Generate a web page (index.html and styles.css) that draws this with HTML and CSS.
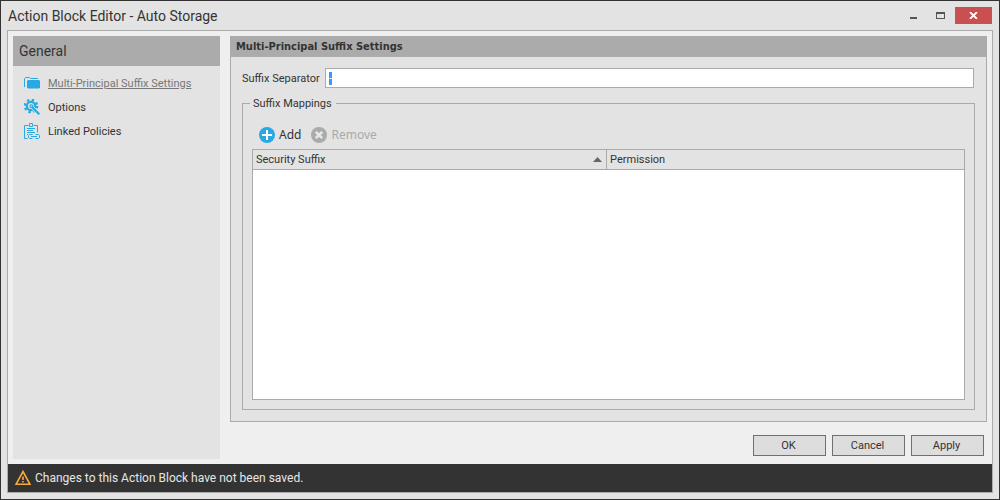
FILE: index.html
```html
<!DOCTYPE html>
<html lang="en">
<head>
<meta charset="utf-8">
<title>Action Block Editor - Auto Storage</title>
<link rel="stylesheet" href="styles.css">
</head>
<body>
<div class="window">
  <header class="titlebar">
    <h1 class="window-title">Action Block Editor - Auto Storage</h1>
    <div class="window-controls">
      <button class="control" type="button" aria-label="Minimize"><svg width="7" height="11" viewBox="0 0 7 11"><path d="M0 7h7v2H0z" fill="#555"/></svg></button>
      <button class="control" type="button" aria-label="Maximize"><svg width="9" height="7" viewBox="0 0 9 7" shape-rendering="crispEdges"><path d="M0 0h9v7H0zM1 2v4h7V2z" fill="#555" fill-rule="evenodd"/></svg></button>
      <button class="control close" type="button" aria-label="Close"><svg width="9" height="7" viewBox="0 0 9 7"><path d="M1 0l7 7M8 0L1 7" stroke="#fff" stroke-width="1.8"/></svg></button>
    </div>
  </header>
  <div class="frame">
    <div class="content">
      <nav class="sidebar">
        <h2 class="sidebar-title">General</h2>
        <ul class="menu">
          <li><a class="menu-link current" href="#suffix">
            <svg class="menu-icon" width="16" height="16" viewBox="0 0 16 16"><path d="M.5 12V3.500L1.500 2.500h4L6.500 3.500H14" fill="none" stroke="#29a9e1"/><path d="M4 5H15l1 1v6.500l-1 1H4l-1-1V6z" fill="#29a9e1"/></svg>
            <span class="menu-text">Multi-Principal Suffix Settings</span></a></li>
          <li><a class="menu-link" href="#options">
            <svg class="menu-icon" width="16" height="16" viewBox="0 0 16 16" fill="none" stroke="#29a9e1"><circle cx="7" cy="7" r="4.200" stroke-width="2.200"/><circle cx="7" cy="7" r="6" stroke-width="2.600" stroke-dasharray="2.300 2.412"/><path d="M8.500 8.500L15 15" stroke="#e3e3e3" stroke-width="3.600"/><circle cx="7.300" cy="7.300" r="1.400" stroke-width="1.200"/><path d="M8.300 8.300L15.300 15.300" stroke-width="2.200"/></svg>
            <span class="menu-text">Options</span></a></li>
          <li><a class="menu-link" href="#policies">
            <svg class="menu-icon" width="16" height="16" viewBox="0 0 16 16" fill="none" stroke="#29a9e1"><path d="M4.500 2.500h-4v13h3M9.500 2.500h4v7M5.500 3.500v-3h3v3z"/><path d="M3 5.500h8M3 7.500h6M3 9.500h8M3 11.500h1"/><path d="M8.500 11.500h-3l-1 1v2l1 1h3M11.500 11.500h3l1 1v2l-1 1h-3M7 13.500h6"/></svg>
            <span class="menu-text">Linked Policies</span></a></li>
        </ul>
      </nav>
      <main class="main">
        <section class="panel" id="suffix">
          <h2 class="panel-title">Multi-Principal Suffix Settings</h2>
          <div class="panel-body">
            <div class="field">
              <label class="field-label" for="separator">Suffix Separator</label>
              <input class="field-input" id="separator" type="text" value="-" autofocus>
            </div>
            <fieldset class="group">
              <legend class="group-title">Suffix Mappings</legend>
              <div class="toolbar">
                <button class="tool" type="button"><svg width="16" height="16" viewBox="0 0 16 16"><circle cx="8" cy="8" r="8" fill="#29a9e1"/><path d="M8 3v10M3 8h10" stroke="#fff" stroke-width="2"/></svg>Add</button>
                <button class="tool" type="button" disabled><svg width="16" height="16" viewBox="0 0 16 16"><circle cx="8" cy="8" r="8" fill="#ababab"/><path d="M4.800 4.800l6.400 6.400M11.200 4.800l-6.400 6.400" stroke="#e9e9e9" stroke-width="2.600"/></svg>Remove</button>
              </div>
              <div class="grid">
                <table class="mappings">
                  <thead><tr>
                    <th class="column sorted" scope="col" aria-sort="ascending"><span class="column-head">Security Suffix<svg width="9" height="5" viewBox="0 0 9 5"><path d="M4.500 0L9 5H0z" fill="#666"/></svg></span></th>
                    <th class="column" scope="col">Permission</th>
                  </tr></thead>
                </table>
              </div>
            </fieldset>
          </div>
        </section>
        <div class="actions">
          <button class="action" type="button">OK</button>
          <button class="action" type="button">Cancel</button>
          <button class="action" type="button">Apply</button>
        </div>
      </main>
    </div>
    <footer class="status">
      <svg width="16" height="16" viewBox="0 0 16 16"><path d="M8 1.500L15 14.300H1z" fill="none" stroke="#f7ab3a" stroke-width="1.600"/><path d="M7.200 6.500h1.600v3.500H7.200zM7.200 11h1.600v1.600H7.200z" fill="#f7ab3a"/></svg>
      <span>Changes to this Action Block have not been saved.</span>
    </footer>
  </div>
</div>
<script src="script.js"></script>
</body>
</html>
```
FILE: styles.css
```css
* { box-sizing: border-box; }

body {
  margin: 0;
  color: #333;
  font: 11px/14px Roboto, Tahoma, sans-serif;
}

h1, h2, ul { margin: 0; padding: 0; font-weight: normal; }
button, input { font: inherit; color: inherit; }
svg { display: block; flex: none; }

.window {
  display: flex;
  flex-direction: column;
  min-height: 100vh;
  padding: 0 6px 6px;
  border: 1px solid #333;
  background: #e3e3e3;
}

.titlebar {
  display: flex;
  justify-content: space-between;
  height: 29px;
}
.window-title {
  padding: 5px 0 0 1px;
  font-size: 14px;
  line-height: 20px;
}
.window-controls { display: flex; padding: 6px 1px 0 0; }
.control {
  display: flex;
  align-items: center;
  justify-content: center;
  width: 27px;
  height: 17px;
  padding: 0;
  border: 0;
  background: none;
}
.close { width: 37px; margin-left: 1px; background: #c94f50; }

.frame {
  display: flex;
  flex: 1;
  flex-direction: column;
  border: 1px solid #aaa;
  background: #efefef;
}
.content { display: flex; flex: 1; gap: 10px; padding: 5px; }

.sidebar { flex: none; width: 207px; background: #e3e3e3; }
.sidebar-title {
  padding: 0 6px;
  background: #ababab;
  font-size: 14px;
  line-height: 30px;
}
.menu { padding: 5px 11px; list-style: none; }
.menu-link {
  display: flex;
  align-items: center;
  gap: 8px;
  height: 24px;
  color: #333;
  text-decoration: none;
}
.menu-text, .field-label { padding-top: 2px; }
.current { color: #777; text-decoration: underline; }

.main { display: flex; flex: 1; flex-direction: column; }
.panel {
  display: flex;
  flex: 1;
  flex-direction: column;
  border: 1px solid #aaa;
  border-top: 0;
  background: #e3e3e3;
}
.panel-title {
  padding: 0 5px;
  background: #ababab;
  font: bold 11px/21px "DejaVu Sans Condensed", Tahoma, sans-serif;
}
.panel-body {
  display: flex;
  flex: 1;
  flex-direction: column;
  gap: 8px;
  padding: 11px;
}
.field { display: flex; align-items: center; gap: 4px; padding-right: 1px; }
.field-label { flex: none; width: 79px; white-space: nowrap; }
.field-input {
  flex: 1;
  min-width: 0;
  height: 20px;
  padding: 0 3px;
  border: 1px solid #aaa;
  outline: 0;
  background: #fff;
}
.field-input::selection { background: #3399ff; color: #fff; }

.group {
  display: flex;
  flex: 1;
  flex-direction: column;
  min-width: 0;
  margin: 0;
  padding: 13px 9px 9px;
  border: 1px solid #aaa;
}
.group-title { margin-left: -2px; padding: 1px 4px 0 3px; }
.toolbar { display: flex; gap: 10px; padding: 2px 7px 5px; }
.tool {
  display: flex;
  align-items: center;
  gap: 4px;
  padding: 0;
  border: 0;
  background: none;
  font: 12px/18px "Noto Sans", sans-serif;
}
.tool:disabled { color: #aaa; }

.grid { flex: 1; border: 1px solid #aaa; background: #fff; }
.mappings { width: 100%; border-spacing: 0; table-layout: fixed; }
.column {
  height: 20px;
  padding: 0 4px 0 3px;
  border-bottom: 1px solid #aaa;
  background: #e3e3e3;
  font-weight: normal;
  text-align: left;
}
.sorted { width: 49.8%; border-right: 1px solid #aaa; }
.column-head { display: flex; align-items: center; justify-content: space-between; }

.actions { display: flex; justify-content: flex-end; gap: 6px; padding: 13px 3px 3px; }
.action {
  width: 73px;
  height: 21px;
  padding: 1px 2px 0 0;
  border: 1px solid #707070;
  background: #ddd;
}

.status {
  display: flex;
  align-items: center;
  gap: 4px;
  height: 28px;
  padding: 0 7px;
  background: #333;
  color: #e6e6e6;
  font-size: 12px;
  line-height: 18px;
}
```
FILE: script.js
```js
const separator = document.getElementById("separator");
separator.focus();
separator.select();
```
